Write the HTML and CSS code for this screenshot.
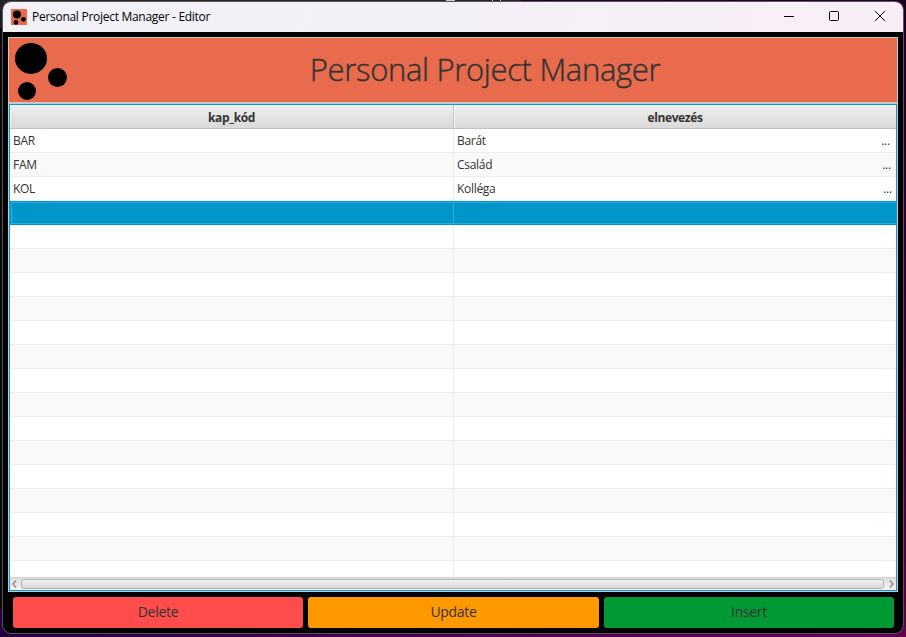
FILE: index.html
```html
<!DOCTYPE html>
<html lang="hu">
<head>
<meta charset="utf-8">
<title>Personal Project Manager - Editor</title>
<link rel="stylesheet" href="styles.css">
</head>
<body>
<div class="backdrop"><i class="tick one"></i><i class="tick two"></i><i class="tick three"></i></div>
<main class="window">
  <header class="titlebar">
    <svg class="app-icon" width="16" height="16" viewBox="0 0 16 16"><path fill="#e96b4d" d="M0 0h16v16H0z"/><circle cx="6" cy="5.6" r="4"/><circle cx="12.4" cy="10.3" r="2.4"/><circle cx="4.9" cy="13.4" r="2.3"/></svg>
    <span class="caption">Personal Project Manager - Editor</span>
    <svg class="controls" width="112" height="30" viewBox="0 0 112 30" fill="none" stroke="#000"><path d="M1 14.5h10"/><rect x="46.5" y="9.5" width="9" height="9" rx="1"/><path d="M92 9l10 10M102 9L92 19"/></svg>
  </header>
  <div class="content">
    <section class="panel">
      <div class="banner">
        <svg class="logo" width="64" height="64" viewBox="0 0 64 64"><ellipse cx="22" cy="20.4" rx="16" ry="15.5"/><circle cx="48.5" cy="39.5" r="9.5"/><circle cx="18" cy="53" r="9"/></svg>
        <h1>Personal Project Manager</h1>
      </div>
      <div class="table">
        <div class="head"><div>kap_kód</div><div>elnevezés</div></div>
        <div class="rows">
          <div class="row"><div>BAR</div><div>Barát<i class="dots d1">...</i></div></div>
          <div class="row"><div>FAM</div><div>Család<i class="dots d2">...</i></div></div>
          <div class="row"><div>KOL</div><div>Kolléga<i class="dots d3">...</i></div></div>
          <div class="row selected"><div></div><div></div></div>
          <div class="row"><div></div><div></div></div>
          <div class="row"><div></div><div></div></div>
          <div class="row"><div></div><div></div></div>
          <div class="row"><div></div><div></div></div>
          <div class="row"><div></div><div></div></div>
          <div class="row"><div></div><div></div></div>
          <div class="row"><div></div><div></div></div>
          <div class="row"><div></div><div></div></div>
          <div class="row"><div></div><div></div></div>
          <div class="row"><div></div><div></div></div>
          <div class="row"><div></div><div></div></div>
          <div class="row"><div></div><div></div></div>
          <div class="row"><div></div><div></div></div>
          <div class="row"><div></div><div></div></div>
          <div class="row"><div></div><div></div></div>
        </div>
        <div class="scrollbar">
          <svg width="11" height="13" viewBox="0 0 11 13"><path d="M6 3.5L3 7l3 3.5"/></svg>
          <div class="thumb"></div>
          <svg width="12" height="13" viewBox="0 0 12 13"><path d="M6 3.5L9 7l-3 3.5"/></svg>
        </div>
      </div>
    </section>
    <div class="buttons">
      <button class="delete">Delete</button>
      <button class="update">Update</button>
      <button class="insert">Insert</button>
    </div>
  </div>
</main>
</body>
</html>
```
FILE: styles.css
```css
* { box-sizing: border-box; }
body {
  margin: 0;
  width: 906px;
  height: 637px;
  padding: 1px 2px 3px;
  overflow: hidden;
  position: relative;
  font-family: "Open Sans", "Noto Sans", sans-serif;
  background: linear-gradient(90deg, #22003f, #42004f 40%, #610050) bottom / 100% 10px no-repeat,
    linear-gradient(#1d1d1f 0 28px, #09090c 28px 610px, #26004a 610px) left / 3px 100% no-repeat,
    linear-gradient(#1d0022, #2c0030 50%, #5a0048);
}
.backdrop {
  position: absolute;
  left: 0;
  top: 0;
  width: 521px;
  height: 12px;
  background: #242424;
}
.tick { position: absolute; top: 0; height: 1px; width: 9px; background: #ccc; }
.one { left: 446px; }
.two { left: 492px; width: 1px; }
.three { left: 500px; width: 1px; }
.window {
  position: relative;
  width: 902px;
  height: 633px;
  border: 1px solid #5c535e;
  border-radius: 9px;
  overflow: hidden;
  background: #000;
}
.titlebar {
  height: 30px;
  display: flex;
  align-items: center;
  padding-left: 8px;
  background: linear-gradient(100deg, #f2f1f8, #f4f0f7 50%, #f9eef7);
}
.app-icon { margin-top: -1px; }
.caption {
  margin-left: 5px;
  font-size: 12px;
  line-height: 16px;
  letter-spacing: -0.28px;
  color: #000;
  white-space: nowrap;
}
.controls { margin-left: auto; margin-right: 8px; }
.content { padding: 5px; }
.panel {
  width: 890px;
  height: 555px;
  padding: 1px;
  background: #c8c8c8;
}
.banner {
  height: 64px;
  display: flex;
  background: #e96b4d;
}
h1 {
  margin: 0;
  width: 824px;
  text-align: center;
  font-size: 31px;
  font-weight: 300;
  line-height: 63px;
  letter-spacing: -0.33px;
  -webkit-text-stroke: 0.4px #333;
  color: #333;
  white-space: nowrap;
}
.table {
  margin-top: 2px;
  height: 487px;
  border: 1px solid #039ed3;
  background: #fff;
  display: flex;
  flex-direction: column;
}
.head, .row { display: grid; grid-template-columns: 444px 442px; grid-template-rows: 100%; flex: none; }
.head {
  height: 24px;
  font-size: 12px;
  font-weight: 700;
  line-height: 25px;
  letter-spacing: -0.4px;
  text-align: center;
  color: #333;
}
.head > div {
  background: linear-gradient(#efefef, #d9d9d9);
  border-bottom: 1px solid #c1c1c1;
  border-right: 1px solid #c4c4c4;
  box-shadow: inset 1px 1px #f7f7f7;
}
.head > div:last-child { border-right: 0; }
.rows {
  height: 448px;
  overflow: hidden;
}
.row {
  height: 24px;
  font-size: 12px;
  line-height: 23px;
  letter-spacing: -0.3px;
  color: #333;
}
.row:nth-child(even) { background: #f9f9f9; }
.row > div {
  display: flex;
  padding-left: 3px;
  border-right: 1px solid #ededed;
  border-bottom: 1px solid #ededed;
}
.row > div:last-child { border-right: 0; }
.row.selected {
  background: #0096c9;
  border: solid #0096c9;
  border-width: 1px 0 1px 1px;
  box-shadow: inset 1px 1px #30acd5, inset 0 -1px #30acd5;
  grid-template-columns: 443px 442px;
}
.row.selected > div { border-bottom: 0; border-color: #30acd5; }
.dots { margin-left: auto; font-style: normal; letter-spacing: -0.2px; line-height: 24px; }
.d1 { margin-right: 6px; }
.d2 { margin-right: 5px; }
.d3 { margin-right: 4px; }
.scrollbar {
  height: 13px;
  display: flex;
  border-top: 1px solid #d3d3d3;
  background: linear-gradient(#dedede, #f2f2f2);
}
.scrollbar svg { margin-top: -1px; fill: none; stroke: #888; stroke-width: 1.3; }
.thumb {
  flex: 1;
  height: 10px;
  margin-top: 1px;
  border: 1px solid #b3b3b3;
  border-radius: 3px;
  background: linear-gradient(#f2f2f2, #d9d9d9);
}
.buttons {
  display: grid;
  grid-template-columns: 290px 291px 290px;
  gap: 5px;
  padding: 5px;
}
button {
  height: 31px;
  padding: 0 0 2px;
  border: 0;
  border-radius: 3px;
  font: 14px/29px "Open Sans", "Noto Sans", sans-serif;
  letter-spacing: -0.3px;
  color: #333;
}
.delete { background: #ff4d4d; }
.update { background: #f90; }
.insert { background: #093; }
```
